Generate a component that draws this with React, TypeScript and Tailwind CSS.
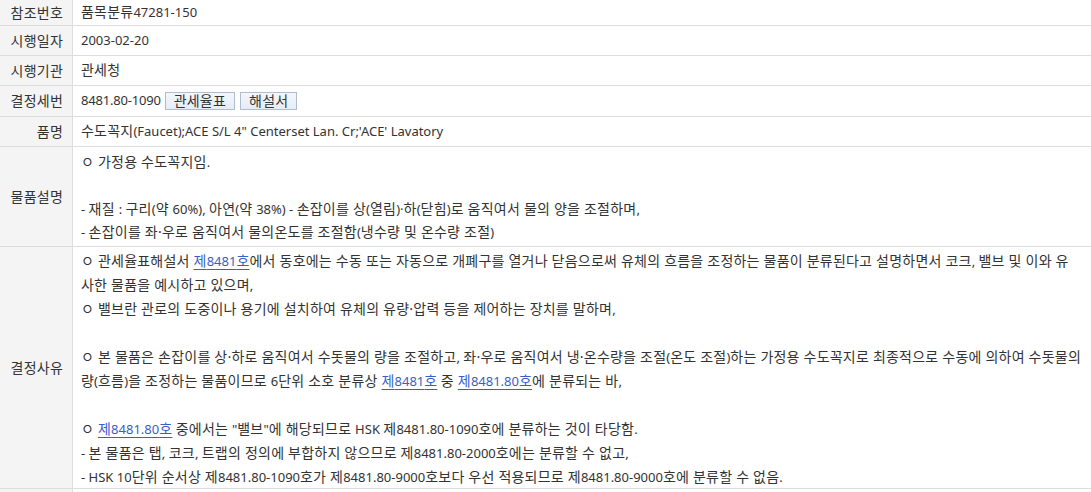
import React from "react";

const HANGUL_RUN = /([\u3131-\u318E\uAC00-\uD7A3][\u3131-\u318E\uAC00-\uD7A3\s·]*)/;
const IS_HANGUL = /^[\u3131-\u318E\uAC00-\uD7A3]/;

function K({ s }: { s: string }) {
  const parts = s.split(HANGUL_RUN).filter((p) => p.length > 0);
  return (
    <>
      {parts.map((p, i) =>
        IS_HANGUL.test(p) ? (
          <span key={i} className="text-[14px] leading-none tracking-[0.22px]">
            {p}
          </span>
        ) : (
          <span key={i} className="leading-none">
            {p}
          </span>
        )
      )}
    </>
  );
}

const L = ({ s }: { s: string }) => (
  <a
    href="#"
    className="leading-none text-[#3a5fc4] underline underline-offset-[3px] decoration-[#3a5fc4]"
  >
    <K s={s} />
  </a>
);

function Row({
  label,
  children,
  h,
}: {
  label: string;
  children: React.ReactNode;
  h?: string;
}) {
  return (
    <div className={`flex border-b border-[#dddddd] ${h ?? ""}`}>
      <div className="w-[73px] shrink-0 bg-[#f4f4f4] border-r border-[#dddddd] flex items-center justify-end pr-[9px] text-[#333]">
        <K s={label} />
      </div>
      <div className="flex-1 min-w-0 pl-[8px] flex items-center text-[#333]">
        {children}
      </div>
    </div>
  );
}

const BTN =
  "h-[18px] px-[8px] border border-[#aebdd2] bg-gradient-to-b from-[#f4f7fb] to-[#e6edf6] text-[#333] text-[13px] leading-[16px]";

export default function App() {
  return (
    <div className="w-[1091px] h-[492px] overflow-hidden bg-white text-[13px] font-['Noto_Sans','Noto_Sans_CJK_KR',sans-serif]">
      <Row label="참조번호" h="h-[26px]">
        <span>
          <K s="품목분류47281-150" />
        </span>
      </Row>
      <Row label="시행일자" h="h-[30px]">
        <span>2003-02-20</span>
      </Row>
      <Row label="시행기관" h="h-[30px]">
        <span>
          <K s="관세청" />
        </span>
      </Row>
      <Row label="결정세번" h="h-[31px]">
        <span className="tracking-[-0.2px]">8481.80-1090</span>
        <button className={`ml-[4px] ${BTN}`}>
          <K s="관세율표" />
        </button>
        <button className={`ml-[5px] ${BTN}`}>
          <K s="해설서" />
        </button>
      </Row>
      <Row label="품명" h="h-[30px]">
        <span className="whitespace-nowrap">
          <K s={`수도꼭지(Faucet);ACE S/L 4" Centerset Lan. Cr;'ACE' Lavatory`} />
        </span>
      </Row>
      <Row label="물품설명" h="h-[100px]">
        <div className="self-stretch pt-[4px] whitespace-nowrap">
          <div className="leading-[23.5px] h-[23.5px]">
            <K s="ㅇ 가정용 수도꼭지임." />
          </div>
          <div className="h-[23.5px]"></div>
          <div className="leading-[23.5px] h-[23.5px]">
            <K s="- 재질 : 구리(약 60%), 아연(약 38%) - 손잡이를 상(열림)·하(닫힘)로 움직여서 물의 양을 조절하며," />
          </div>
          <div className="leading-[20px] h-[20px]">
            <K s="- 손잡이를 좌·우로 움직여서 물의온도를 조절함(냉수량 및 온수량 조절)" />
          </div>
        </div>
      </Row>
      <Row label="결정사유" h="h-[242px]">
        <div className="self-stretch pt-[2px] whitespace-nowrap leading-[24px] [&>div]:h-[24px]">
          <div>
            <K s="ㅇ 관세율표해설서 " />
            <L s="제8481호" />
            <K s="에서 동호에는 수동 또는 자동으로 개폐구를 열거나 닫음으로써 유체의 흐름을 조정하는 물품이 분류된다고 설명하면서 코크, 밸브 및 이와 유" />
          </div>
          <div>
            <K s="사한 물품을 예시하고 있으며," />
          </div>
          <div>
            <K s="ㅇ 밸브란 관로의 도중이나 용기에 설치하여 유체의 유량·압력 등을 제어하는 장치를 말하며," />
          </div>
          <div></div>
          <div>
            <K s="ㅇ 본 물품은 손잡이를 상·하로 움직여서 수돗물의 량을 조절하고, 좌·우로 움직여서 냉·온수량을 조절(온도 조절)하는 가정용 수도꼭지로 최종적으로 수동에 의하여 수돗물의" />
          </div>
          <div>
            <K s="량(흐름)을 조정하는 물품이므로 6단위 소호 분류상 " />
            <L s="제8481호" />
            <K s=" 중 " />
            <L s="제8481.80호" />
            <K s="에 분류되는 바," />
          </div>
          <div></div>
          <div>
            <K s="ㅇ " />
            <L s="제8481.80호" />
            <K s={` 중에서는 "밸브"에 해당되므로 HSK 제8481.80-1090호에 분류하는 것이 타당함.`} />
          </div>
          <div>
            <K s="- 본 물품은 탭, 코크, 트랩의 정의에 부합하지 않으므로 제8481.80-2000호에는 분류할 수 없고," />
          </div>
          <div>
            <K s="- HSK 10단위 순서상 제8481.80-1090호가 제8481.80-9000호보다 우선 적용되므로 제8481.80-9000호에 분류할 수 없음." />
          </div>
        </div>
      </Row>
      <div className="flex h-[30px]">
        <div className="w-[73px] shrink-0 bg-[#f4f4f4] border-r border-[#dddddd]"></div>
        <div className="flex-1"></div>
      </div>
    </div>
  );
}
